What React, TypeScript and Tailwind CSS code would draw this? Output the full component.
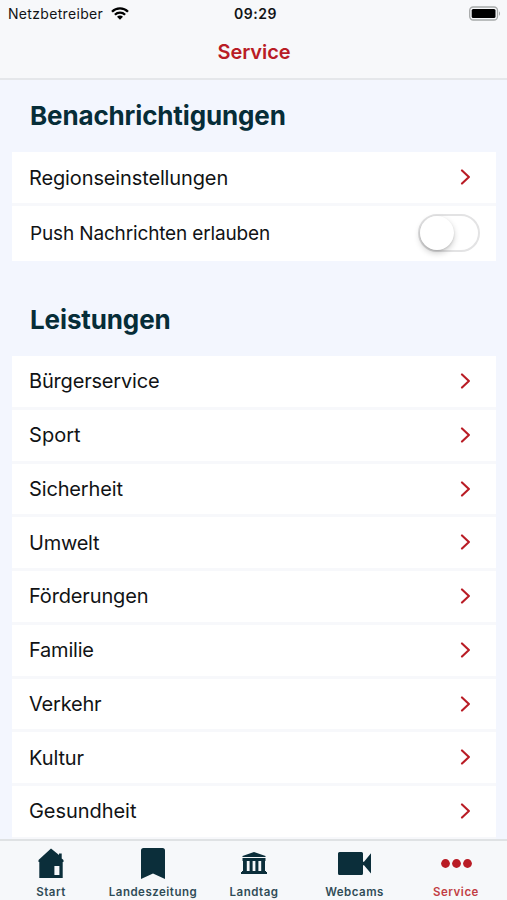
import type { ReactNode } from 'react';

const services: { label: string; tracking: string }[] = [
  { label: 'Bürgerservice', tracking: 'tracking-[-0.18px]' },
  { label: 'Sport', tracking: 'tracking-[0.05px]' },
  { label: 'Sicherheit', tracking: 'tracking-[-0.15px]' },
  { label: 'Umwelt', tracking: 'tracking-[-0.25px]' },
  { label: 'Förderungen', tracking: 'tracking-[-0.15px]' },
  { label: 'Familie', tracking: 'tracking-[-0.22px]' },
  { label: 'Verkehr', tracking: 'tracking-[-0.2px]' },
  { label: 'Kultur', tracking: 'tracking-[-0.1px]' },
  { label: 'Gesundheit', tracking: 'tracking-[-0.05px]' },
];

function Chevron() {
  return (
    <svg className="mr-[25px] mb-[0.5px] h-4 w-[11px] shrink-0" viewBox="0 0 11 16" fill="none" stroke="#b91c25" strokeWidth="2.1" strokeLinecap="round" strokeLinejoin="round">
      <path d="M2 1.4 8.9 8 2 14.6" />
    </svg>
  );
}

function Toggle() {
  return (
    <div className="mr-4 mb-px flex h-[38px] w-[62px] shrink-0 items-center rounded-full border-2 border-[#e3e3e4] bg-white">
      <div className="size-[34px] rounded-full bg-white shadow-[0_3px_6px_rgba(0,0,0,0.2),0_1px_2px_rgba(0,0,0,0.12)]" />
    </div>
  );
}

function Tab({ label, width, color, children }: { label: string; width: string; color: string; children: ReactNode }) {
  return (
    <div className={`flex flex-col items-center ${width} ${color}`}>
      <div className="flex h-11 items-center">{children}</div>
      <span className="text-[11.5px] leading-[14px] font-semibold tracking-[0.5px] whitespace-nowrap opacity-85">{label}</span>
    </div>
  );
}

export default function App() {
  return (
    <div className="flex h-[900px] w-[507px] flex-col overflow-hidden bg-[#f3f6fe] font-['Inter',sans-serif] text-[#111315]">
      <header className="flex h-[80px] shrink-0 flex-col border-b-2 border-[#e5e7ea] bg-[#f7f8fa]">
        <div className="grid h-7 shrink-0 grid-cols-[1fr_auto_1fr] items-center pr-[6px] pl-2">
          <div className="flex items-center gap-2">
            <span className="text-[14px] leading-[18px] tracking-[0.32px]">Netzbetreiber</span>
            <svg className="mb-[2px] h-[13px] w-[18px]" viewBox="0 0 18 13" fill="none" stroke="#000" strokeWidth="2.3">
              <path d="M1 4.7C5.4.3 12.6.3 17 4.7M3.9 7.7C6.7 4.9 11.3 4.9 14.1 7.7" />
              <path d="M6 9.8C7.7 8.1 10.3 8.1 12 9.8L9 12.8Z" fill="#000" stroke="none" />
            </svg>
          </div>
          <span className="pl-[2px] text-[14px] leading-[18px] font-semibold tracking-[0.5px]">09:29</span>
          <svg className="mb-[2px] h-[15px] w-[33px] justify-self-end" viewBox="0 0 33 15">
            <rect x="1.7" y="1" width="27.8" height="13" rx="3.5" fill="#f7f8fa" stroke="#a7a9a9" strokeWidth="1.3" />
            <rect x="3.7" y="3" width="23.8" height="9" rx="1.5" fill="#000" />
            <path d="M31 5.2C32.4 6 32.4 9 31 9.8Z" fill="#a7a9a9" />
          </svg>
        </div>
        <h1 className="pl-px text-center text-[20px] leading-[49px] font-semibold tracking-[-0.1px] text-[#b91c25]">Service</h1>
      </header>

      <main className="flex min-h-0 flex-1 flex-col overflow-hidden pr-[11px] pl-3">
        <h2 className="h-[72px] shrink-0 pl-[18px] text-[26px] leading-[72px] font-bold tracking-[-0.14px] text-[#062d38]">Benachrichtigungen</h2>
        <section className="shrink-0 bg-white">
          <div className="flex h-[54px] items-center justify-between border-b-3 border-[#f7f8fb] pl-[17px]">
            <span className="text-[20px] leading-6 tracking-[-0.13px]">Regionseinstellungen</span>
            <Chevron />
          </div>
          <div className="flex h-[55px] items-center justify-between pl-[18px]">
            <span className="text-[19px] leading-6 tracking-[-0.15px]">Push Nachrichten erlauben</span>
            <Toggle />
          </div>
        </section>
        <h2 className="mt-[23px] h-[72px] shrink-0 pl-[18px] text-[26px] leading-[72px] font-bold tracking-[-0.12px] text-[#062d38]">Leistungen</h2>
        <ul className="shrink-0 bg-white">
          {services.map(({ label, tracking }) => (
            <li key={label} className="flex h-[53.75px] items-center justify-between border-b-3 border-[#f7f8fb] pl-[17px]">
              <span className={`text-[20px] leading-6 ${tracking}`}>{label}</span>
              <Chevron />
            </li>
          ))}
        </ul>
      </main>

      <nav className="flex h-[61px] shrink-0 border-t-2 border-[#dfe2e4] bg-[#f6f8fa]">
        <Tab label="Start" width="w-[102px]" color="text-[#0b2e3a]">
          <svg className="h-[31px] w-[26px]" viewBox="0 0 26 31" fill="currentColor">
            <path fillRule="evenodd" d="M13 .5 21 7V5.5h2.7v5L25.5 12v2h-.8v16H1.3V14H.5v-2ZM16.4 18v9h5v-9Z" />
          </svg>
        </Tab>
        <Tab label="Landeszeitung" width="w-[102px]" color="text-[#0b2e3a]">
          <svg className="h-[31px] w-6" viewBox="0 0 24 31" fill="currentColor">
            <path d="M2.5 0h19Q24 0 24 2.5V31l-12-5.5L0 31V2.5Q0 0 2.5 0Z" />
          </svg>
        </Tab>
        <Tab label="Landtag" width="w-[100px]" color="text-[#0b2e3a]">
          <svg className="h-[22px] w-[26px]" viewBox="0 0 26 22" fill="currentColor">
            <path d="M13 0 24.5 4V5h-23V4ZM1.5 6h23v3h-23ZM2 9h3.8v10H2ZM8.6 9h3v10h-3ZM14.4 9h3v10h-3ZM20.2 9H24v10h-3.8ZM1 19h24v1H26v2H0v-2h1Z" />
          </svg>
        </Tab>
        <Tab label="Webcams" width="w-[101px]" color="text-[#0b2e3a]">
          <svg className="h-[23px] w-[33px]" viewBox="0 0 33 23" fill="currentColor">
            <path d="M1.5 0h22Q25 0 25 1.5V9.7h1L33 1.2v20.4L26 13.3h-1v8.2Q25 23 23.5 23h-22Q0 23 0 21.5v-20Q0 0 1.5 0Z" />
          </svg>
        </Tab>
        <Tab label="Service" width="w-[102px]" color="text-[#b91c25]">
          <svg className="h-[9px] w-[31px]" viewBox="0 0 31 9" fill="currentColor">
            <circle cx="4.5" cy="4.5" r="4.4" />
            <circle cx="15.5" cy="4.5" r="4.4" />
            <circle cx="26.5" cy="4.5" r="4.4" />
          </svg>
        </Tab>
      </nav>
    </div>
  );
}
